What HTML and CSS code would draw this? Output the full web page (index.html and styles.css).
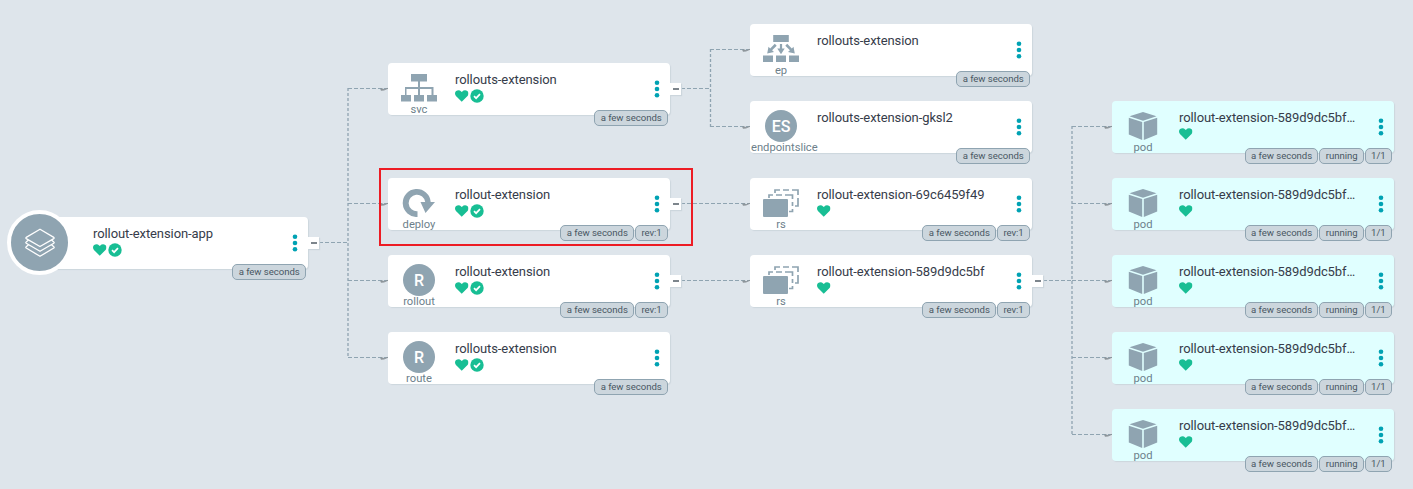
FILE: index.html
```html
<!DOCTYPE html>
<html lang="en">
<head>
<meta charset="utf-8">
<title>rollout-extension-app</title>
<link rel="stylesheet" href="styles.css">
</head>
<body>
<svg class="defs" aria-hidden="true">
  <symbol id="heart" viewBox="0 0 14 12"><path d="M7 12 1 6C-.4 4.500-.3 2 1.200.9 3-.4 5.200 0 6.400 1.300L7 1.900l.6-.6C8.800 0 11-.4 12.800.9c1.500 1.100 1.600 3.600.2 5.100z"/></symbol>
  <symbol id="check" viewBox="0 0 14 14"><circle cx="7" cy="7" r="6.700"/><path d="M4 7.200 6.100 9.200 10 5.200" fill="none" stroke="#fff" stroke-width="1.700"/></symbol>
  <symbol id="dots" viewBox="0 0 6 18"><circle cx="3" cy="2.700" r="2.300"/><circle cx="3" cy="9" r="2.300"/><circle cx="3" cy="15.300" r="2.300"/></symbol>
  <symbol id="svc" viewBox="0 0 36 28"><path d="M10 0h16v7.500h-7V13h13.500v8H36v6.500H26V21h4.500v-6H19v6h4v6.500H13V21h4v-6H5.500v6H10v6.500H0V21h4v-8h13V7.500h-7z"/></symbol>
  <symbol id="ep" viewBox="0 0 36 28"><path d="M10.200 0h15.600v7H10.200zM0 20.500h10V27H0zM13 20.500h10V27H13zM26 20.500h10V27H26zM16.900 9h2.200v4.500h2.600L18 19.300l-3.700-5.800h2.600zM11.800 8.800l1.900 1.900-4.600 4.600 1.900 1.800-6.800 1.400 1.300-6.700 1.700 1.600zM24.200 8.800l-1.900 1.900 4.600 4.600-1.900 1.800 6.800 1.400-1.300-6.700-1.700 1.600z"/></symbol>
  <symbol id="deploy" viewBox="0 0 32 28"><path d="M14.500 28A14 14 0 1 1 27.700 13H32L22.500 24 17.500 13h4.700a8.300 8.300 0 1 0-7.700 9.300z"/></symbol>
  <symbol id="rs" viewBox="0 0 36 28"><rect y="10" width="25" height="18" rx="1"/><g fill="none" stroke="currentColor" stroke-width="1.700"><path d="M6 9V6h4M13 6h6M22 6h7.500v4M29.500 13v4M29.500 20v2.500H26M12 4V1h5M20 1h6M29 1h6v5M35 9v6M32 17h3v-2"/></g></symbol>
  <symbol id="pod" viewBox="0 0 30 28"><path d="M15 0 28.500 4.300 15 8.800 1.500 4.300zM.8 5.800 14.200 10v18L.8 22.500zM29.200 5.800 15.800 10v18l13.400-5.500z"/></symbol>
  <symbol id="layers" viewBox="0 0 32 30"><g fill="none" stroke="#fff" stroke-width="1.300" stroke-linejoin="round"><path d="M16 1.200 29.800 9.400q.8.600 0 1.200L16 18.500 2.200 10.600q-.8-.6 0-1.200z"/><path d="M4.500 12 2.200 14q-.8.600 0 1.200L16 23.300l13.800-8.100q.8-.6 0-1.200l-2.300-2"/><path d="M4.500 16.800 2.200 18.800q-.8.600 0 1.200L16 28.300l13.800-8.300q.8-.6 0-1.200l-2.300-2"/></g></symbol>
  <symbol id="tip" viewBox="0 0 8 4"><path d="M0 1h3l1 .8L8 .2v1L4 3 1 3.200z"/></symbol>
</svg>

<main class="canvas">
  <svg class="edges" width="1413" height="489" aria-hidden="true">
    <path d="M319 242.500H348M348 88.500H388M348 203.500H388M348 280.500H388M348 357.500H388M681 88.500H710M710 49.500H750M710 126.500H750M681 203.500H750M681 280.500H750M1043 280.500H1072M1072 126.500H1112M1072 203.500H1112M1072 280.500H1112M1072 357.500H1112M1072 434.500H1112"/>
    <path class="trunk" d="M348 88V358M710.500 49V127M1072 126V435"/>
    <g class="tips">
      <use href="#tip" x="380" y="87.500" width="8" height="4"/><use href="#tip" x="380" y="202.500" width="8" height="4"/><use href="#tip" x="380" y="279.500" width="8" height="4"/><use href="#tip" x="380" y="356.500" width="8" height="4"/>
      <use href="#tip" x="742" y="48.500" width="8" height="4"/><use href="#tip" x="742" y="125.500" width="8" height="4"/><use href="#tip" x="742" y="202.500" width="8" height="4"/><use href="#tip" x="742" y="279.500" width="8" height="4"/>
      <use href="#tip" x="1104" y="125.500" width="8" height="4"/><use href="#tip" x="1104" y="202.500" width="8" height="4"/><use href="#tip" x="1104" y="279.500" width="8" height="4"/><use href="#tip" x="1104" y="356.500" width="8" height="4"/><use href="#tip" x="1104" y="433.500" width="8" height="4"/>
    </g>
  </svg>

  <section class="column column-app">
    <article class="node">
      <div class="app-icon"><svg><use href="#layers"/></svg></div>
      <div class="kind"></div>
      <div class="info"><div class="title">rollout-extension-app</div><div class="status"><svg class="heart"><use href="#heart"/></svg><svg class="check"><use href="#check"/></svg></div></div>
      <svg class="menu"><use href="#dots"/></svg><div class="toggle"></div>
      <div class="tags"><span>a few seconds</span></div>
    </article>
  </section>

  <section class="column column-resources">
    <article class="node service">
      <div class="kind"><svg class="glyph"><use href="#svc"/></svg><span>svc</span></div>
      <div class="info"><div class="title">rollouts-extension</div><div class="status"><svg class="heart"><use href="#heart"/></svg><svg class="check"><use href="#check"/></svg></div></div>
      <svg class="menu"><use href="#dots"/></svg><div class="toggle"></div>
      <div class="tags"><span>a few seconds</span></div>
    </article>
    <article class="node">
      <div class="highlight"></div>
      <div class="kind"><svg class="glyph"><use href="#deploy"/></svg><span>deploy</span></div>
      <div class="info"><div class="title">rollout-extension</div><div class="status"><svg class="heart"><use href="#heart"/></svg><svg class="check"><use href="#check"/></svg></div></div>
      <svg class="menu"><use href="#dots"/></svg><div class="toggle"></div>
      <div class="tags"><span>a few seconds</span><span>rev:1</span></div>
    </article>
    <article class="node">
      <div class="kind"><b class="letter">R</b><span>rollout</span></div>
      <div class="info"><div class="title">rollout-extension</div><div class="status"><svg class="heart"><use href="#heart"/></svg><svg class="check"><use href="#check"/></svg></div></div>
      <svg class="menu"><use href="#dots"/></svg><div class="toggle"></div>
      <div class="tags"><span>a few seconds</span><span>rev:1</span></div>
    </article>
    <article class="node">
      <div class="kind"><b class="letter">R</b><span>route</span></div>
      <div class="info"><div class="title">rollouts-extension</div><div class="status"><svg class="heart"><use href="#heart"/></svg><svg class="check"><use href="#check"/></svg></div></div>
      <svg class="menu"><use href="#dots"/></svg>
      <div class="tags"><span>a few seconds</span></div>
    </article>
  </section>

  <section class="column column-children">
    <article class="node">
      <div class="kind"><svg class="glyph"><use href="#ep"/></svg><span>ep</span></div>
      <div class="info"><div class="title">rollouts-extension</div></div>
      <svg class="menu"><use href="#dots"/></svg>
      <div class="tags"><span>a few seconds</span></div>
    </article>
    <article class="node">
      <div class="kind"><b class="letter">ES</b><span class="wide">endpointslice</span></div>
      <div class="info"><div class="title">rollouts-extension-gksl2</div></div>
      <svg class="menu"><use href="#dots"/></svg>
      <div class="tags"><span>a few seconds</span></div>
    </article>
    <article class="node">
      <div class="kind"><svg class="glyph"><use href="#rs"/></svg><span>rs</span></div>
      <div class="info"><div class="title">rollout-extension-69c6459f49</div><div class="status"><svg class="heart"><use href="#heart"/></svg></div></div>
      <svg class="menu"><use href="#dots"/></svg>
      <div class="tags"><span>a few seconds</span><span>rev:1</span></div>
    </article>
    <article class="node">
      <div class="kind"><svg class="glyph"><use href="#rs"/></svg><span>rs</span></div>
      <div class="info"><div class="title">rollout-extension-589d9dc5bf</div><div class="status"><svg class="heart"><use href="#heart"/></svg></div></div>
      <svg class="menu"><use href="#dots"/></svg><div class="toggle"></div>
      <div class="tags"><span>a few seconds</span><span>rev:1</span></div>
    </article>
  </section>

  <section class="column column-pods">
    <article class="node pod">
      <div class="kind"><svg class="glyph"><use href="#pod"/></svg><span>pod</span></div>
      <div class="info"><div class="title">rollout-extension-589d9dc5bf…</div><div class="status"><svg class="heart"><use href="#heart"/></svg></div></div>
      <svg class="menu"><use href="#dots"/></svg>
      <div class="tags"><span>a few seconds</span><span>running</span><span>1/1</span></div>
    </article>
    <article class="node pod">
      <div class="kind"><svg class="glyph"><use href="#pod"/></svg><span>pod</span></div>
      <div class="info"><div class="title">rollout-extension-589d9dc5bf…</div><div class="status"><svg class="heart"><use href="#heart"/></svg></div></div>
      <svg class="menu"><use href="#dots"/></svg>
      <div class="tags"><span>a few seconds</span><span>running</span><span>1/1</span></div>
    </article>
    <article class="node pod">
      <div class="kind"><svg class="glyph"><use href="#pod"/></svg><span>pod</span></div>
      <div class="info"><div class="title">rollout-extension-589d9dc5bf…</div><div class="status"><svg class="heart"><use href="#heart"/></svg></div></div>
      <svg class="menu"><use href="#dots"/></svg>
      <div class="tags"><span>a few seconds</span><span>running</span><span>1/1</span></div>
    </article>
    <article class="node pod">
      <div class="kind"><svg class="glyph"><use href="#pod"/></svg><span>pod</span></div>
      <div class="info"><div class="title">rollout-extension-589d9dc5bf…</div><div class="status"><svg class="heart"><use href="#heart"/></svg></div></div>
      <svg class="menu"><use href="#dots"/></svg>
      <div class="tags"><span>a few seconds</span><span>running</span><span>1/1</span></div>
    </article>
    <article class="node pod">
      <div class="kind"><svg class="glyph"><use href="#pod"/></svg><span>pod</span></div>
      <div class="info"><div class="title">rollout-extension-589d9dc5bf…</div><div class="status"><svg class="heart"><use href="#heart"/></svg></div></div>
      <svg class="menu"><use href="#dots"/></svg>
      <div class="tags"><span>a few seconds</span><span>running</span><span>1/1</span></div>
    </article>
  </section>
</main>
</body>
</html>
```
FILE: styles.css
```css
* { box-sizing: border-box; }
body { margin: 0; background: #dee5eb; font-family: Roboto, sans-serif; color: #363c4a; }
.defs { display: none; }
.canvas { position: relative; display: flex; gap: 80px; width: 1413px; height: 489px; padding-left: 26px; overflow: hidden; }
.edges { position: absolute; left: 0; top: 0; fill: none; stroke: #8fa4b1; stroke-width: 1; stroke-dasharray: 4 2; }
.trunk { stroke-dasharray: 3 2; stroke-width: 1.3; }
.tips { fill: #8c9499; stroke: none; }

.column { display: flex; flex-direction: column; gap: 25px; width: 282px; flex: none; }
.column-app { padding-top: 217px; }
.column-resources { padding-top: 63px; }
.column-children { padding-top: 24px; }
.column-pods { padding-top: 101px; }

.node { position: relative; display: flex; width: 282px; height: 52px; flex: none; background: #fff; border-radius: 4px; box-shadow: 1px 1px 1px #ccd6dd; }
.service { margin-bottom: 38px; }
.pod { background: #e0ffff; }

.kind { display: flex; flex-direction: column; align-items: center; width: 62px; flex: none; padding-top: 9px; color: #8fa4b1; }
.kind span { font-size: 11.2px; line-height: 13px; color: #6d7f8b; white-space: nowrap; margin-top: -1px; }
.kind .wide { align-self: flex-start; margin-left: 1px; }
.glyph { width: 36px; height: 28px; margin: 2px 0; fill: currentColor; flex: none; }
.letter { width: 32px; height: 32px; flex: none; border-radius: 50%; background: #8fa4b1; color: #fff; font-size: 16px; font-weight: 500; line-height: 33px; text-align: center; }

.info { flex: 1; padding: 8px 0 0 5px; }
.title { font-size: 13px; line-height: 17px; letter-spacing: -0.09px; white-space: nowrap; }
.status { display: flex; align-items: center; gap: 1px; height: 14px; margin-top: 1px; fill: #18be94; }
.heart { width: 13.5px; height: 12px; }
.check { width: 14px; height: 14px; }
.menu { width: 6px; height: 18px; margin: 16.5px 10.5px 0 0; fill: #00a2b3; flex: none; }

.toggle { position: absolute; left: 282px; top: 20px; width: 11px; height: 12px; background: #fff; box-shadow: 1px 1px 1px #ccd6dd; display: flex; align-items: center; justify-content: center; }
.toggle::before { content: ""; width: 6px; height: 2px; background: #7d858c; }

.tags { position: absolute; right: 2px; bottom: -11px; display: flex; gap: 1px; }
.tags span { height: 16px; padding: 0 5.3px; border: 1px solid #8fa4b1; border-radius: 5px; background: #ccd6dd; color: #495763; font-size: 9.6px; line-height: 14px; letter-spacing: -0.05px; white-space: nowrap; }

.app-icon { position: absolute; left: -19px; top: -7px; width: 65px; height: 65px; border: 4px solid #fff; border-radius: 50%; background: #8fa4b1; display: flex; align-items: center; justify-content: center; }
.app-icon svg { width: 32px; height: 30px; }
.highlight { position: absolute; left: -9px; top: -10px; width: 314px; height: 78px; border: 2px solid #ed1c24; z-index: 2; }
```
